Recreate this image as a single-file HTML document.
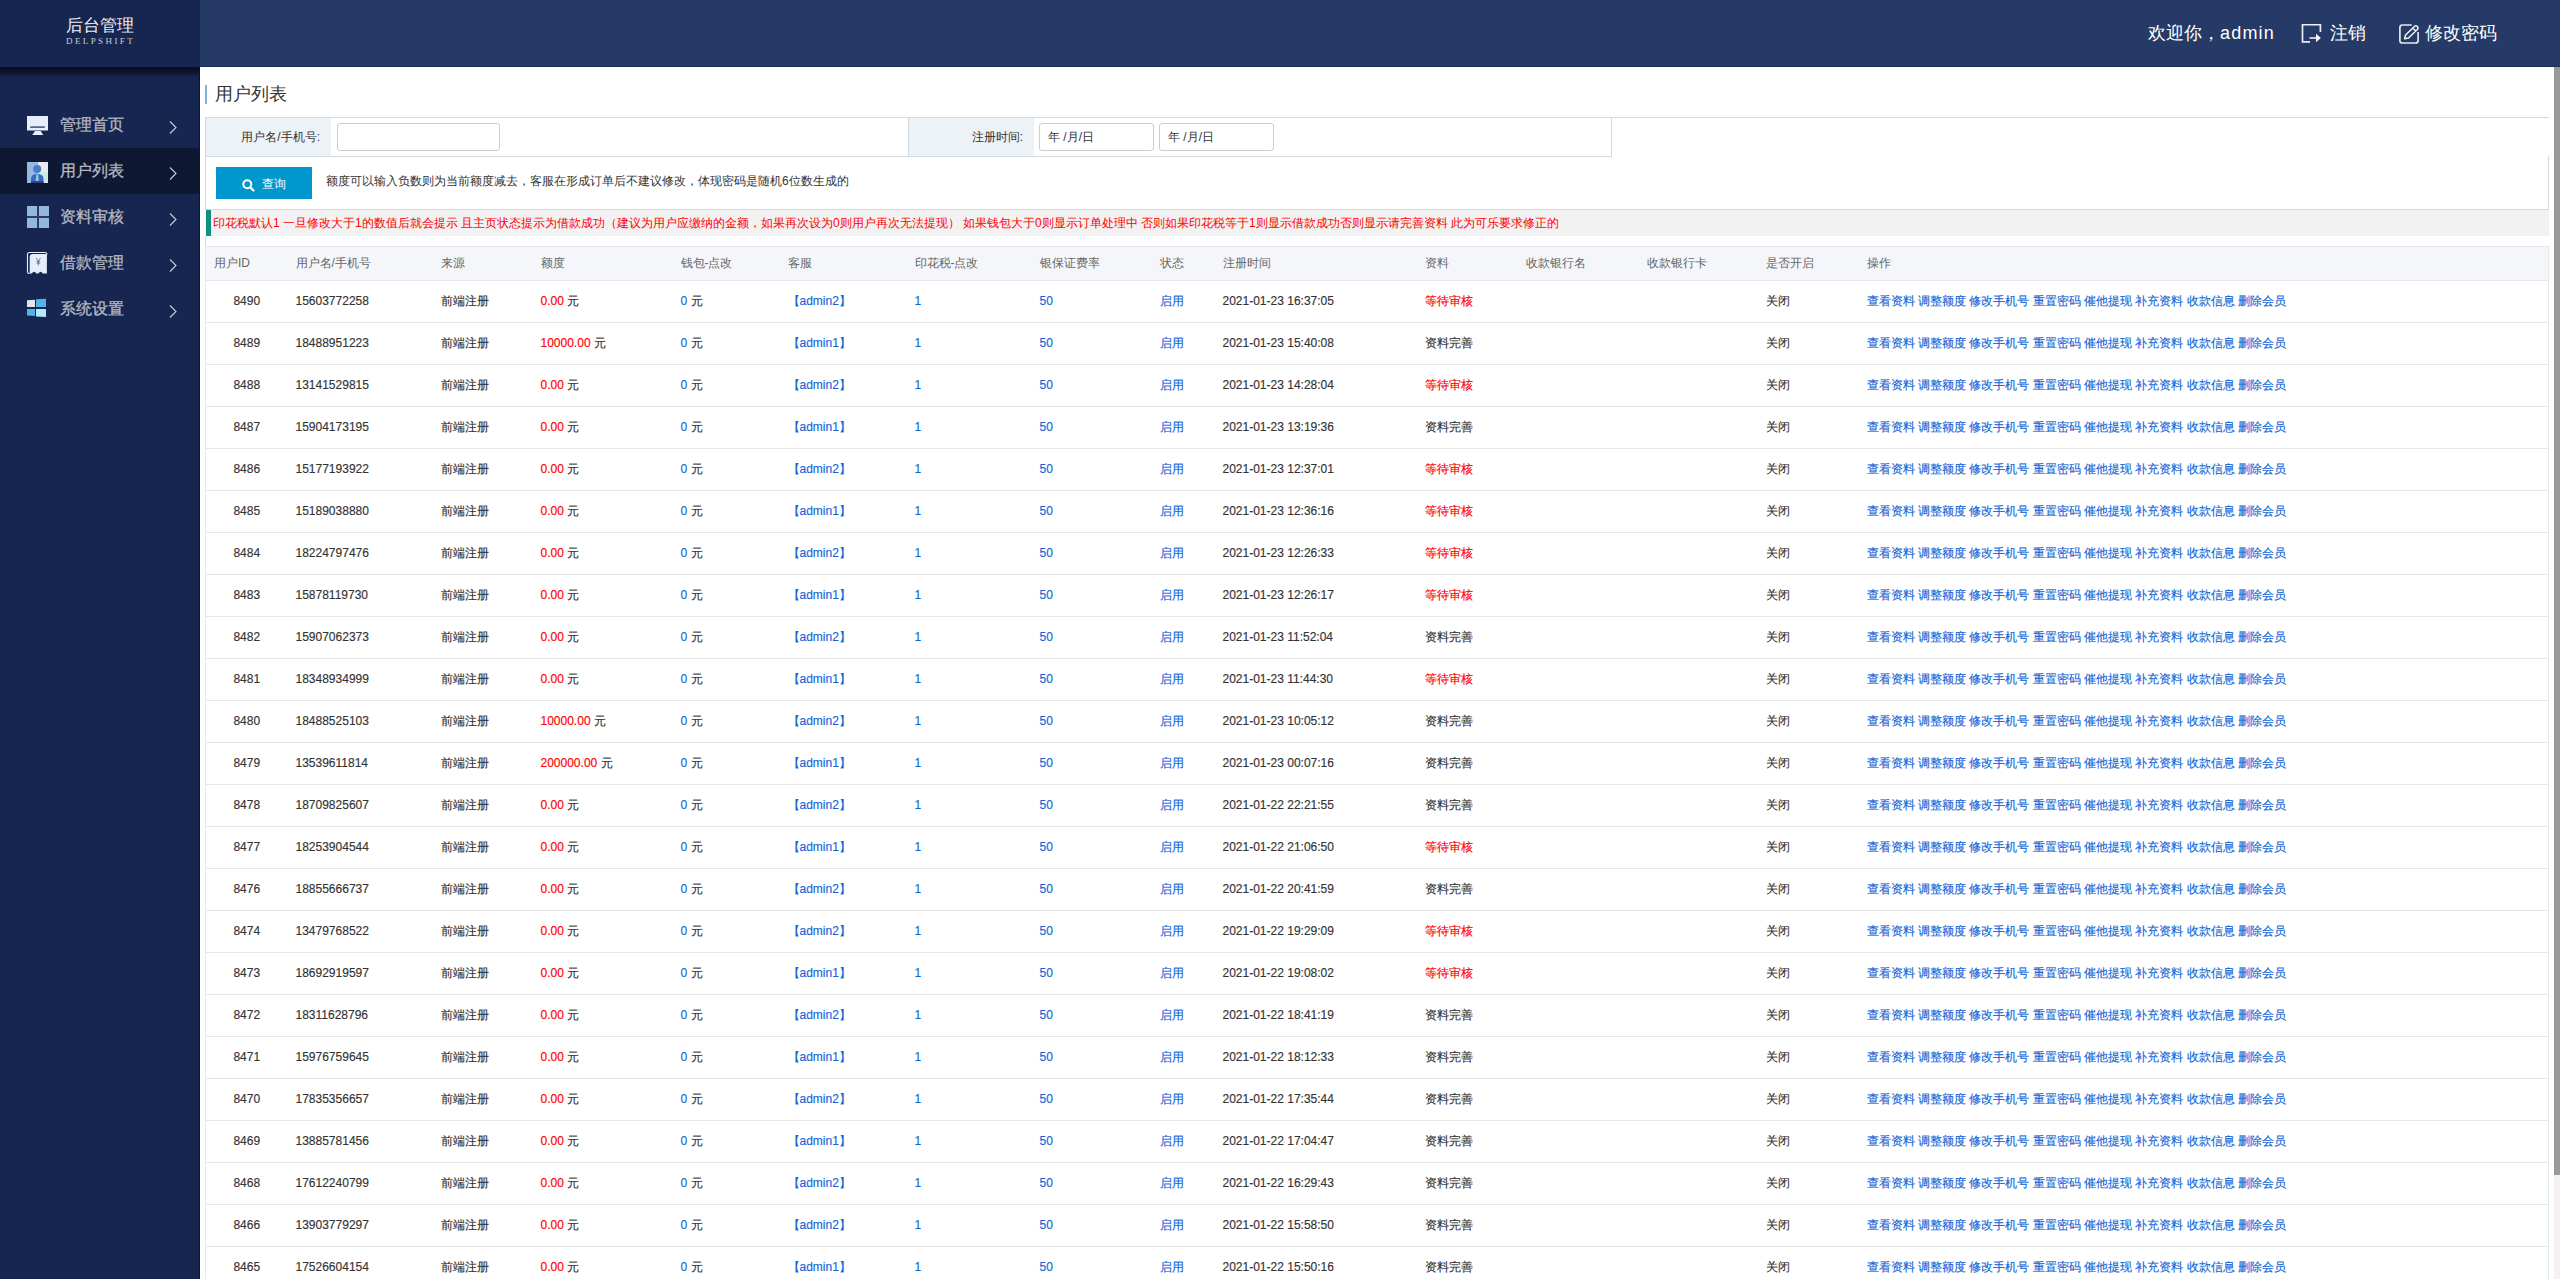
<!DOCTYPE html>
<html><head><meta charset="utf-8"><title>用户列表</title>
<style>
*{margin:0;padding:0;box-sizing:border-box}
html,body{width:2560px;height:1279px;overflow:hidden;background:#fff;font-family:"Liberation Sans",sans-serif;font-size:12px;color:#333}
#side{position:absolute;left:0;top:0;width:200px;height:1279px;background:#172650}
#logo{position:absolute;left:0;top:0;width:200px;height:67px;background:#172650;z-index:2}
#shadow{position:absolute;left:0;top:67px;width:199px;height:11px;background:linear-gradient(to bottom,rgba(6,10,26,.95),rgba(6,10,26,.75) 35%,rgba(6,10,26,.25) 75%,rgba(6,10,26,0));z-index:2}
#sline{position:absolute;left:199px;top:67px;width:1px;height:1212px;background:#0b1434;z-index:3}
#logo .t1{position:absolute;left:66px;top:14px;width:72px;font-size:17px;line-height:24px;color:#eceef4;white-space:nowrap}
#logo .t2{position:absolute;left:66px;top:37px;font-family:"Liberation Serif",serif;font-size:9px;line-height:9px;letter-spacing:2.4px;color:#c8cdd8;white-space:nowrap}
#menu{position:absolute;left:0;top:102px;width:200px}
#menu .it{position:relative;height:46px;color:#b4b8c2;font-size:16px;line-height:46px;-webkit-text-stroke:0.3px currentColor}
#menu .it.on{background:#0f1832}
#menu .it .ic{position:absolute;left:26px;top:0}
#menu .it .tx{position:absolute;left:60px;top:0;white-space:nowrap}
#menu .it .ar{position:absolute;left:169px;top:19px;width:8px;height:13px}
#head{position:absolute;left:200px;top:0;width:2360px;height:67px;background:#253a66;border-bottom:1px solid #1b2d5a}
#head .u{position:absolute;top:21px;font-size:18px;line-height:24px;color:#fff;white-space:nowrap}
#main{position:absolute;left:200px;top:67px;width:2354px;height:1212px;background:#fff;overflow:hidden}
#sb{position:absolute;left:2554px;top:67px;width:6px;height:1212px;background:#f5f1f0}
#sb .th{position:absolute;left:0;top:0;width:6px;height:1108px;background:#999}

#title{position:absolute;left:5px;top:18px;height:19px;border-left:2px solid #8ab0d8}
#title span{position:absolute;left:8px;top:-3px;font-size:18px;line-height:24px;color:#333;white-space:nowrap}
#sbox{position:absolute;left:5px;top:50px;width:2344px;height:43px;border-top:1px solid #cfdae2}
#ftab{position:absolute;left:0;top:0;width:1407px;height:39px;border:1px solid #cfdae2;border-top:0}
#ftab .lb{position:absolute;top:0;height:38px;background:#edf2f6;text-align:right;line-height:38px;padding-right:11px;white-space:nowrap}
#ftab .in{position:absolute;top:5px;height:28px;border:1px solid #cccccc;border-radius:3px;background:#fff}
#ftab .dt{font-size:12px;line-height:26px;padding-left:8px;color:#333;white-space:nowrap}
#brow{position:absolute;left:5px;top:89px;width:2344px;height:54px;border:1px solid #cfdae2;border-top:0}
#btn{position:absolute;left:10px;top:11px;width:96px;height:32px;background:#0098cc;color:#fff;font-size:12px;line-height:32px}
#btn svg{position:absolute;left:26px;top:12px}
#btn span{position:absolute;left:46px;top:1px}
#help{position:absolute;left:120px;top:17px;line-height:16px;white-space:nowrap;color:#333}
#notice{position:absolute;left:6px;top:143px;width:2343px;height:26px;background:#f2f2f2;border-left:5px solid #0f917d;color:#ff0000;line-height:26px;padding-left:2px;white-space:nowrap}
#tb{position:absolute;left:5px;top:179px;width:2344px;border-collapse:collapse;table-layout:fixed;border-left:1px solid #e3e8ed;border-right:1px solid #e3e8ed}
#tb th{height:34px;background:#f5f6fa;color:#666;font-weight:normal;text-align:left;padding:0 0 2px 8px;border-top:1px solid #e3e8ed;border-bottom:1px solid #e3e8ed;white-space:nowrap;line-height:16px}
#tb td{-webkit-text-stroke:0.15px currentColor;height:42px;padding:0 0 2px 8px;border-bottom:1px solid #e3e8ed;white-space:nowrap;line-height:16px;color:#333}
#tb td.c{text-align:center;padding:0 0 2px 0}
#tb .r{color:#ff0000}
#tb .b{color:#1466d6}
</style></head><body>
<div id="side">
  <div id="shadow"></div><div id="sline"></div><div id="logo"><div class="t1">后台管理</div><div class="t2">DELPSHIFT</div></div>
  <div id="menu">
    <div class="it"><svg class="ic" width="26" height="46" viewBox="0 0 26 46"><rect x="1" y="14" width="21" height="14.5" fill="#e4eefc"/><rect x="4" y="24.3" width="15" height="1.8" rx=".9" fill="#56658c"/><path d="M9 29 H14.6 L17.3 33 H6.2 Z" fill="#e4eefc"/></svg><span class="tx">管理首页</span><svg class="ar" viewBox="0 0 8 13"><path d="M1 .5 7 6.5 1 12.5" fill="none" stroke="#c8ccd6" stroke-width="1.1"/></svg></div>
    <div class="it on"><svg class="ic" width="26" height="46" viewBox="0 0 26 46"><rect x="1" y="14" width="10.5" height="21" fill="#94b8de"/><rect x="11.5" y="14" width="10.5" height="10" fill="#e6e9ee"/><rect x="11.5" y="24" width="10.5" height="11" fill="#cfe8e2"/><circle cx="11.2" cy="21.1" r="4" fill="#4a7ccc"/><path d="M5 35 V31 Q5 26 11.2 26 Q17.5 26 17.5 31 V35 Z" fill="#3470b8"/><path d="M10.2 26.5 H12.2 L12.8 33.5 L11.2 35 L9.6 33.5 Z" fill="#9ac0e8"/><rect x="5" y="33" width="12.5" height="2" fill="#30409a"/></svg><span class="tx">用户列表</span><svg class="ar" viewBox="0 0 8 13"><path d="M1 .5 7 6.5 1 12.5" fill="none" stroke="#c8ccd6" stroke-width="1.1"/></svg></div>
    <div class="it"><svg class="ic" width="26" height="46" viewBox="0 0 26 46"><rect x="1" y="12" width="22" height="22" fill="#2f3b60"/><rect x="1" y="12" width="10" height="10" fill="#92b8de"/><rect x="13" y="12" width="10" height="10" fill="#92b8de"/><rect x="1" y="24" width="10" height="10" fill="#92b8de"/><rect x="13" y="24" width="10" height="10" fill="#92b8de"/></svg><span class="tx">资料审核</span><svg class="ar" viewBox="0 0 8 13"><path d="M1 .5 7 6.5 1 12.5" fill="none" stroke="#c8ccd6" stroke-width="1.1"/></svg></div>
    <div class="it"><svg class="ic" width="26" height="46" viewBox="0 0 26 46"><path d="M1.5 32 V14.5 Q1.5 12.5 3.5 12.5 H19 Q21 12.5 21 14.5" fill="none" stroke="#e8eef8" stroke-width="1.1"/><path d="M1.5 32 Q1.5 33.4 3 33.4 H3.7" fill="none" stroke="#e8eef8" stroke-width="1.1"/><path d="M3.7 33.6 V17 Q3.7 13.9 6.8 13.9 H20.9 V33.6 H16.8 Q14.6 29.8 12.4 33.6 H10.3 Q8.1 29.8 5.9 33.6 Z" fill="#e4eefc"/><path d="M10 18 L12.3 21.2 L14.6 18 M12.3 21.2 V25.5 M10.5 21.6 H14.1 M10.5 23.2 H14.1" fill="none" stroke="#55607e" stroke-width=".8"/></svg><span class="tx">借款管理</span><svg class="ar" viewBox="0 0 8 13"><path d="M1 .5 7 6.5 1 12.5" fill="none" stroke="#c8ccd6" stroke-width="1.1"/></svg></div>
    <div class="it"><svg class="ic" width="26" height="46" viewBox="0 0 26 46"><path d="M1 14.2 L9 13.8 V21 H1 Z" fill="#e4e6ea"/><path d="M10 13.2 L20 12.8 V21 H10 Z" fill="#50b4ec"/><path d="M1 23 H9 V30 L1 29.6 Z" fill="#50b4ec"/><path d="M10 23 H20 V31 L10 30.6 Z" fill="#b4e8fc"/></svg><span class="tx">系统设置</span><svg class="ar" viewBox="0 0 8 13"><path d="M1 .5 7 6.5 1 12.5" fill="none" stroke="#c8ccd6" stroke-width="1.1"/></svg></div>
  </div>
</div>
<div id="head">
  <span class="u" style="left:1948px">欢迎你，<span style="letter-spacing:1.2px">admin</span></span>
  <svg style="position:absolute;left:2096px;top:18px" width="32" height="32" viewBox="0 0 32 32"><path d="M14 23.9 H6.5 V6.75 H24.4 V14" fill="none" stroke="#eceef6" stroke-width="1.7"/><path d="M13.5 20 H21" stroke="#eceef6" stroke-width="1.6"/><path d="M20 15.8 L24.9 20 L20 24.2 Z" fill="#f4f6fa"/></svg>
  <span class="u" style="left:2130px">注销</span>
  <svg style="position:absolute;left:2194px;top:18px" width="32" height="32" viewBox="0 0 32 32"><path d="M17.75 7 H8.4 Q5.9 7 5.9 9.5 V22.5 Q5.9 25 8.4 25 H21.6 Q24.1 25 24.1 22.5 V14" fill="none" stroke="#e4e6f0" stroke-width="1.7"/><g transform="translate(10.6,20.8) rotate(-44)"><path d="M0 0 L3.4 -2.1 H16 Q17.6 -2.1 17.6 0 Q17.6 2.1 16 2.1 H3.4 Z M13.4 -2.1 V2.1" fill="none" stroke="#f0f2f8" stroke-width="1.5" stroke-linejoin="round"/></g></svg>
  <span class="u" style="left:2225px">修改密码</span>
</div>
<div id="main">
<div id="title"><span>用户列表</span></div>
<div id="sbox">
 <div id="ftab">
  <div class="lb" style="left:0;width:125px">用户名/手机号:</div>
  <div class="in" style="left:131px;width:163px"></div>
  <div style="position:absolute;left:702px;top:0;width:1px;height:38px;background:#cfdae2"></div>
  <div class="lb" style="left:703px;width:125px">注册时间:</div>
  <div class="in dt" style="left:833px;width:115px">年 /月/日</div>
  <div class="in dt" style="left:953px;width:115px">年 /月/日</div>
 </div>
</div>
<div id="brow">
 <div id="btn"><svg width="13" height="13" viewBox="0 0 13 13"><circle cx="5.3" cy="5.3" r="4" fill="none" stroke="#fff" stroke-width="2"/><path d="M8.2 8.2 11.5 11.5" stroke="#fff" stroke-width="2.2" stroke-linecap="round"/></svg><span>查询</span></div>
 <div id="help">额度可以输入负数则为当前额度减去，客服在形成订单后不建议修改，体现密码是随机6位数生成的</div>
</div>
<div id="notice">印花税默认1 一旦修改大于1的数值后就会提示 且主页状态提示为借款成功（建议为用户应缴纳的金额，如果再次设为0则用户再次无法提现） 如果钱包大于0则显示订单处理中 否则如果印花税等于1则显示借款成功否则显示请完善资料 此为可乐要求修正的</div>
<div style="position:absolute;left:5px;top:169px;width:1px;height:10px;background:#cfdae2"></div>
<table id="tb">
<colgroup><col style="width:82px"><col style="width:145px"><col style="width:100px"><col style="width:140px"><col style="width:107px"><col style="width:127px"><col style="width:125px"><col style="width:120px"><col style="width:63px"><col style="width:202px"><col style="width:101px"><col style="width:121px"><col style="width:119px"><col style="width:101px"><col></colgroup>
<tr><th>用户ID</th><th>用户名/手机号</th><th>来源</th><th>额度</th><th>钱包-点改</th><th>客服</th><th>印花税-点改</th><th>银保证费率</th><th>状态</th><th>注册时间</th><th>资料</th><th>收款银行名</th><th>收款银行卡</th><th>是否开启</th><th>操作</th></tr>
<tr><td class="c">8490</td><td>15603772258</td><td>前端注册</td><td><span class="r">0.00</span> 元</td><td><span class="b">0</span> 元</td><td class="b">【admin2】</td><td class="b">1</td><td class="b">50</td><td class="b">启用</td><td>2021-01-23 16:37:05</td><td class="r">等待审核</td><td></td><td></td><td>关闭</td><td class="b ops">查看资料 调整额度 修改手机号 重置密码 催他提现 补充资料 收款信息 删除会员</td></tr>
<tr><td class="c">8489</td><td>18488951223</td><td>前端注册</td><td><span class="r">10000.00</span> 元</td><td><span class="b">0</span> 元</td><td class="b">【admin1】</td><td class="b">1</td><td class="b">50</td><td class="b">启用</td><td>2021-01-23 15:40:08</td><td>资料完善</td><td></td><td></td><td>关闭</td><td class="b ops">查看资料 调整额度 修改手机号 重置密码 催他提现 补充资料 收款信息 删除会员</td></tr>
<tr><td class="c">8488</td><td>13141529815</td><td>前端注册</td><td><span class="r">0.00</span> 元</td><td><span class="b">0</span> 元</td><td class="b">【admin2】</td><td class="b">1</td><td class="b">50</td><td class="b">启用</td><td>2021-01-23 14:28:04</td><td class="r">等待审核</td><td></td><td></td><td>关闭</td><td class="b ops">查看资料 调整额度 修改手机号 重置密码 催他提现 补充资料 收款信息 删除会员</td></tr>
<tr><td class="c">8487</td><td>15904173195</td><td>前端注册</td><td><span class="r">0.00</span> 元</td><td><span class="b">0</span> 元</td><td class="b">【admin1】</td><td class="b">1</td><td class="b">50</td><td class="b">启用</td><td>2021-01-23 13:19:36</td><td>资料完善</td><td></td><td></td><td>关闭</td><td class="b ops">查看资料 调整额度 修改手机号 重置密码 催他提现 补充资料 收款信息 删除会员</td></tr>
<tr><td class="c">8486</td><td>15177193922</td><td>前端注册</td><td><span class="r">0.00</span> 元</td><td><span class="b">0</span> 元</td><td class="b">【admin2】</td><td class="b">1</td><td class="b">50</td><td class="b">启用</td><td>2021-01-23 12:37:01</td><td class="r">等待审核</td><td></td><td></td><td>关闭</td><td class="b ops">查看资料 调整额度 修改手机号 重置密码 催他提现 补充资料 收款信息 删除会员</td></tr>
<tr><td class="c">8485</td><td>15189038880</td><td>前端注册</td><td><span class="r">0.00</span> 元</td><td><span class="b">0</span> 元</td><td class="b">【admin1】</td><td class="b">1</td><td class="b">50</td><td class="b">启用</td><td>2021-01-23 12:36:16</td><td class="r">等待审核</td><td></td><td></td><td>关闭</td><td class="b ops">查看资料 调整额度 修改手机号 重置密码 催他提现 补充资料 收款信息 删除会员</td></tr>
<tr><td class="c">8484</td><td>18224797476</td><td>前端注册</td><td><span class="r">0.00</span> 元</td><td><span class="b">0</span> 元</td><td class="b">【admin2】</td><td class="b">1</td><td class="b">50</td><td class="b">启用</td><td>2021-01-23 12:26:33</td><td class="r">等待审核</td><td></td><td></td><td>关闭</td><td class="b ops">查看资料 调整额度 修改手机号 重置密码 催他提现 补充资料 收款信息 删除会员</td></tr>
<tr><td class="c">8483</td><td>15878119730</td><td>前端注册</td><td><span class="r">0.00</span> 元</td><td><span class="b">0</span> 元</td><td class="b">【admin1】</td><td class="b">1</td><td class="b">50</td><td class="b">启用</td><td>2021-01-23 12:26:17</td><td class="r">等待审核</td><td></td><td></td><td>关闭</td><td class="b ops">查看资料 调整额度 修改手机号 重置密码 催他提现 补充资料 收款信息 删除会员</td></tr>
<tr><td class="c">8482</td><td>15907062373</td><td>前端注册</td><td><span class="r">0.00</span> 元</td><td><span class="b">0</span> 元</td><td class="b">【admin2】</td><td class="b">1</td><td class="b">50</td><td class="b">启用</td><td>2021-01-23 11:52:04</td><td>资料完善</td><td></td><td></td><td>关闭</td><td class="b ops">查看资料 调整额度 修改手机号 重置密码 催他提现 补充资料 收款信息 删除会员</td></tr>
<tr><td class="c">8481</td><td>18348934999</td><td>前端注册</td><td><span class="r">0.00</span> 元</td><td><span class="b">0</span> 元</td><td class="b">【admin1】</td><td class="b">1</td><td class="b">50</td><td class="b">启用</td><td>2021-01-23 11:44:30</td><td class="r">等待审核</td><td></td><td></td><td>关闭</td><td class="b ops">查看资料 调整额度 修改手机号 重置密码 催他提现 补充资料 收款信息 删除会员</td></tr>
<tr><td class="c">8480</td><td>18488525103</td><td>前端注册</td><td><span class="r">10000.00</span> 元</td><td><span class="b">0</span> 元</td><td class="b">【admin2】</td><td class="b">1</td><td class="b">50</td><td class="b">启用</td><td>2021-01-23 10:05:12</td><td>资料完善</td><td></td><td></td><td>关闭</td><td class="b ops">查看资料 调整额度 修改手机号 重置密码 催他提现 补充资料 收款信息 删除会员</td></tr>
<tr><td class="c">8479</td><td>13539611814</td><td>前端注册</td><td><span class="r">200000.00</span> 元</td><td><span class="b">0</span> 元</td><td class="b">【admin1】</td><td class="b">1</td><td class="b">50</td><td class="b">启用</td><td>2021-01-23 00:07:16</td><td>资料完善</td><td></td><td></td><td>关闭</td><td class="b ops">查看资料 调整额度 修改手机号 重置密码 催他提现 补充资料 收款信息 删除会员</td></tr>
<tr><td class="c">8478</td><td>18709825607</td><td>前端注册</td><td><span class="r">0.00</span> 元</td><td><span class="b">0</span> 元</td><td class="b">【admin2】</td><td class="b">1</td><td class="b">50</td><td class="b">启用</td><td>2021-01-22 22:21:55</td><td>资料完善</td><td></td><td></td><td>关闭</td><td class="b ops">查看资料 调整额度 修改手机号 重置密码 催他提现 补充资料 收款信息 删除会员</td></tr>
<tr><td class="c">8477</td><td>18253904544</td><td>前端注册</td><td><span class="r">0.00</span> 元</td><td><span class="b">0</span> 元</td><td class="b">【admin1】</td><td class="b">1</td><td class="b">50</td><td class="b">启用</td><td>2021-01-22 21:06:50</td><td class="r">等待审核</td><td></td><td></td><td>关闭</td><td class="b ops">查看资料 调整额度 修改手机号 重置密码 催他提现 补充资料 收款信息 删除会员</td></tr>
<tr><td class="c">8476</td><td>18855666737</td><td>前端注册</td><td><span class="r">0.00</span> 元</td><td><span class="b">0</span> 元</td><td class="b">【admin2】</td><td class="b">1</td><td class="b">50</td><td class="b">启用</td><td>2021-01-22 20:41:59</td><td>资料完善</td><td></td><td></td><td>关闭</td><td class="b ops">查看资料 调整额度 修改手机号 重置密码 催他提现 补充资料 收款信息 删除会员</td></tr>
<tr><td class="c">8474</td><td>13479768522</td><td>前端注册</td><td><span class="r">0.00</span> 元</td><td><span class="b">0</span> 元</td><td class="b">【admin2】</td><td class="b">1</td><td class="b">50</td><td class="b">启用</td><td>2021-01-22 19:29:09</td><td class="r">等待审核</td><td></td><td></td><td>关闭</td><td class="b ops">查看资料 调整额度 修改手机号 重置密码 催他提现 补充资料 收款信息 删除会员</td></tr>
<tr><td class="c">8473</td><td>18692919597</td><td>前端注册</td><td><span class="r">0.00</span> 元</td><td><span class="b">0</span> 元</td><td class="b">【admin1】</td><td class="b">1</td><td class="b">50</td><td class="b">启用</td><td>2021-01-22 19:08:02</td><td class="r">等待审核</td><td></td><td></td><td>关闭</td><td class="b ops">查看资料 调整额度 修改手机号 重置密码 催他提现 补充资料 收款信息 删除会员</td></tr>
<tr><td class="c">8472</td><td>18311628796</td><td>前端注册</td><td><span class="r">0.00</span> 元</td><td><span class="b">0</span> 元</td><td class="b">【admin2】</td><td class="b">1</td><td class="b">50</td><td class="b">启用</td><td>2021-01-22 18:41:19</td><td>资料完善</td><td></td><td></td><td>关闭</td><td class="b ops">查看资料 调整额度 修改手机号 重置密码 催他提现 补充资料 收款信息 删除会员</td></tr>
<tr><td class="c">8471</td><td>15976759645</td><td>前端注册</td><td><span class="r">0.00</span> 元</td><td><span class="b">0</span> 元</td><td class="b">【admin1】</td><td class="b">1</td><td class="b">50</td><td class="b">启用</td><td>2021-01-22 18:12:33</td><td>资料完善</td><td></td><td></td><td>关闭</td><td class="b ops">查看资料 调整额度 修改手机号 重置密码 催他提现 补充资料 收款信息 删除会员</td></tr>
<tr><td class="c">8470</td><td>17835356657</td><td>前端注册</td><td><span class="r">0.00</span> 元</td><td><span class="b">0</span> 元</td><td class="b">【admin2】</td><td class="b">1</td><td class="b">50</td><td class="b">启用</td><td>2021-01-22 17:35:44</td><td>资料完善</td><td></td><td></td><td>关闭</td><td class="b ops">查看资料 调整额度 修改手机号 重置密码 催他提现 补充资料 收款信息 删除会员</td></tr>
<tr><td class="c">8469</td><td>13885781456</td><td>前端注册</td><td><span class="r">0.00</span> 元</td><td><span class="b">0</span> 元</td><td class="b">【admin1】</td><td class="b">1</td><td class="b">50</td><td class="b">启用</td><td>2021-01-22 17:04:47</td><td>资料完善</td><td></td><td></td><td>关闭</td><td class="b ops">查看资料 调整额度 修改手机号 重置密码 催他提现 补充资料 收款信息 删除会员</td></tr>
<tr><td class="c">8468</td><td>17612240799</td><td>前端注册</td><td><span class="r">0.00</span> 元</td><td><span class="b">0</span> 元</td><td class="b">【admin2】</td><td class="b">1</td><td class="b">50</td><td class="b">启用</td><td>2021-01-22 16:29:43</td><td>资料完善</td><td></td><td></td><td>关闭</td><td class="b ops">查看资料 调整额度 修改手机号 重置密码 催他提现 补充资料 收款信息 删除会员</td></tr>
<tr><td class="c">8466</td><td>13903779297</td><td>前端注册</td><td><span class="r">0.00</span> 元</td><td><span class="b">0</span> 元</td><td class="b">【admin2】</td><td class="b">1</td><td class="b">50</td><td class="b">启用</td><td>2021-01-22 15:58:50</td><td>资料完善</td><td></td><td></td><td>关闭</td><td class="b ops">查看资料 调整额度 修改手机号 重置密码 催他提现 补充资料 收款信息 删除会员</td></tr>
<tr><td class="c">8465</td><td>17526604154</td><td>前端注册</td><td><span class="r">0.00</span> 元</td><td><span class="b">0</span> 元</td><td class="b">【admin1】</td><td class="b">1</td><td class="b">50</td><td class="b">启用</td><td>2021-01-22 15:50:16</td><td>资料完善</td><td></td><td></td><td>关闭</td><td class="b ops">查看资料 调整额度 修改手机号 重置密码 催他提现 补充资料 收款信息 删除会员</td></tr>
</table>
</div>
<div id="sb"><div class="th"></div></div>
</body></html>
